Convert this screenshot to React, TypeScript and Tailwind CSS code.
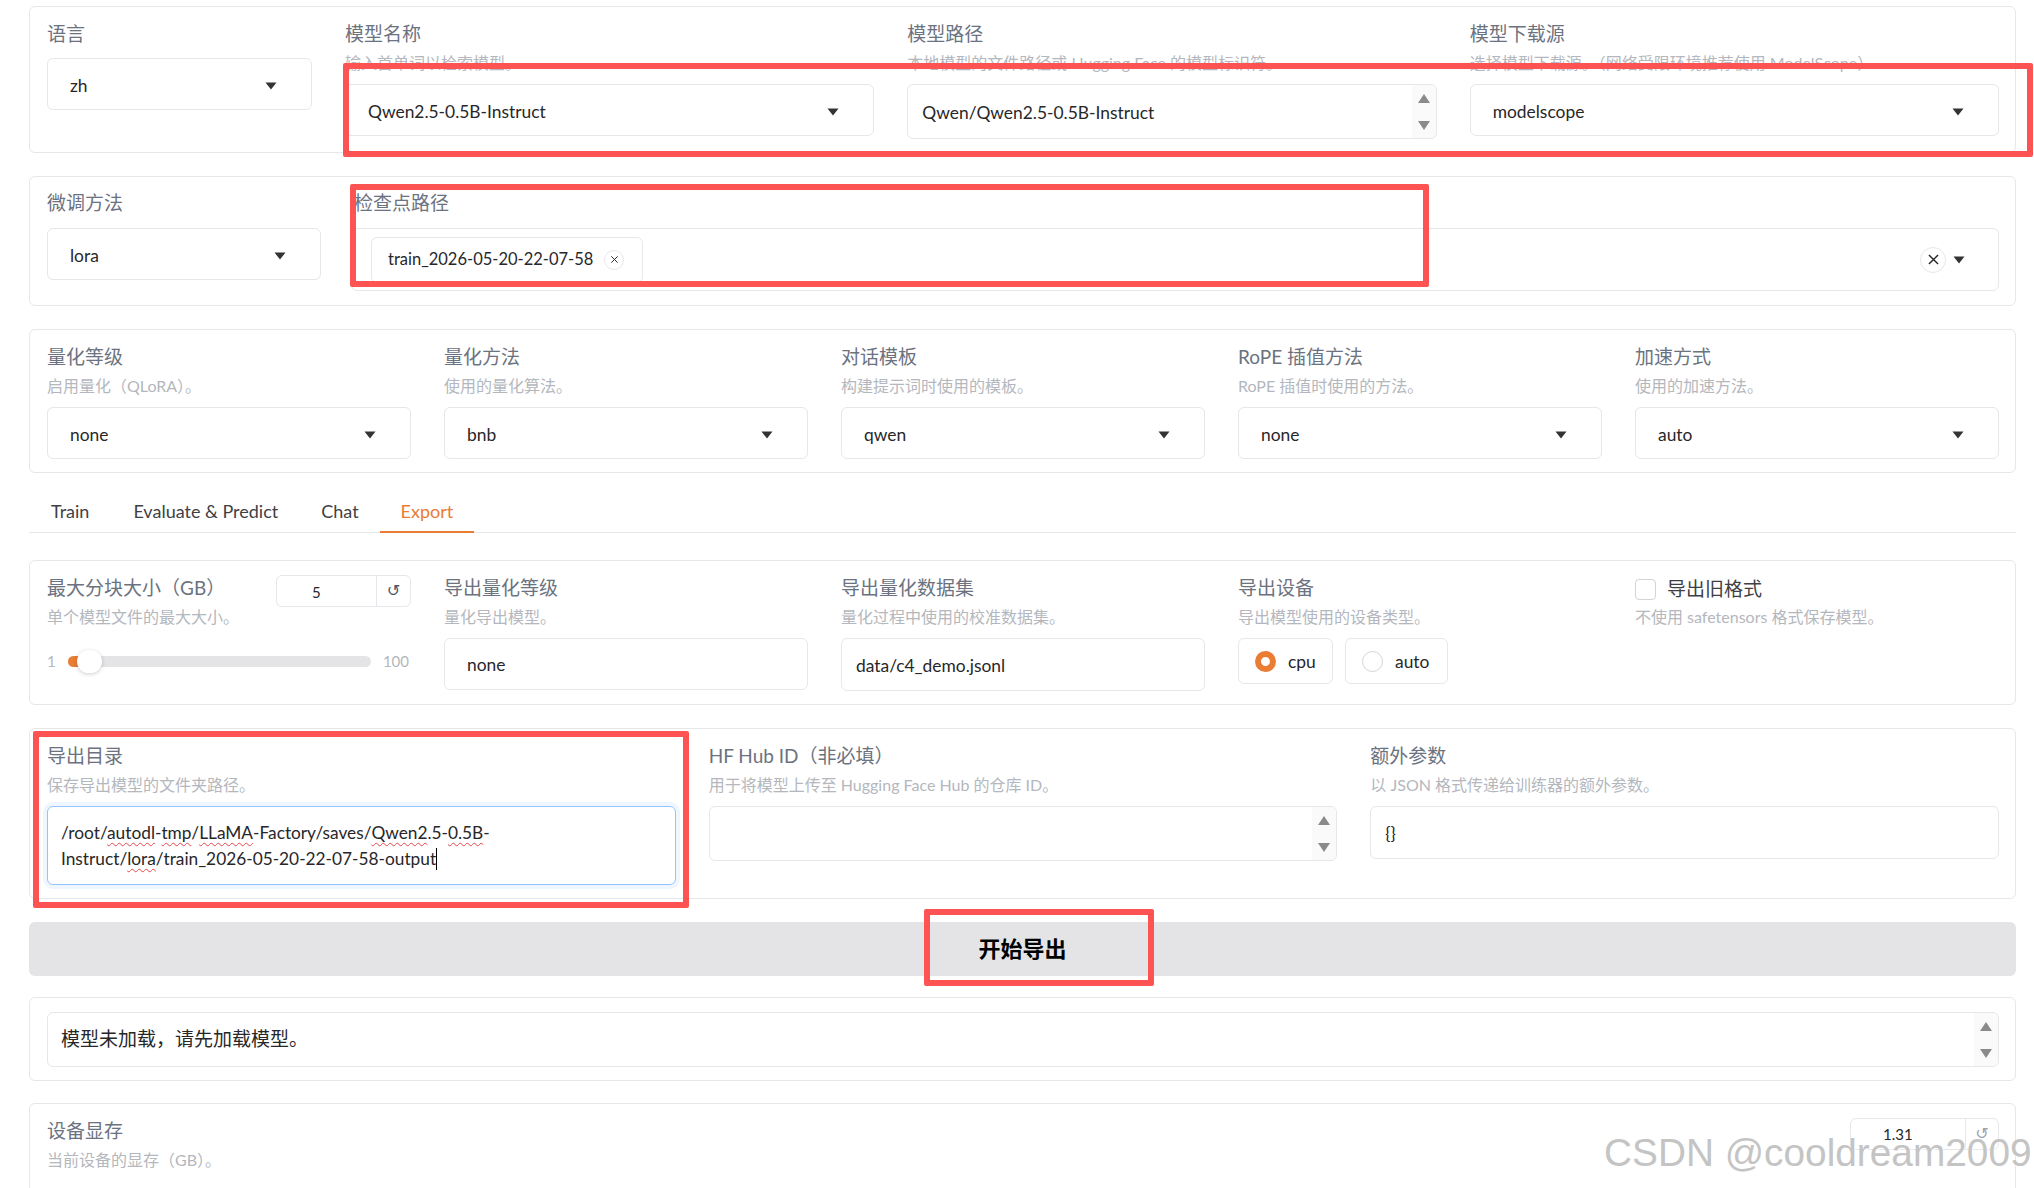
import React from "react";

const Card = ({ className = "", children }: { className?: string; children: React.ReactNode }) => (
  <div className={`box-border rounded-md border border-[#e5e7eb] bg-white pl-[17px] pr-[16px] pt-[14px] ${className}`}>{children}</div>
);

const Label = ({ children, className = "" }: { children: React.ReactNode; className?: string }) => (
  <div className={`h-[25px] whitespace-nowrap text-[19px] leading-[25px] text-[#6b7280] ${className}`}>{children}</div>
);

const Info = ({ children }: { children: React.ReactNode }) => (
  <div className="mt-[5px] h-[24px] whitespace-nowrap text-[16px] leading-[24px] text-[#b4b7bd]">{children}</div>
);

const Arrow = ({ className = "" }: { className?: string }) => (
  <svg width="12" height="8" viewBox="0 0 12 8" className={className}>
    <path d="M0.5 0.5h11L6 7.5z" fill="#333" />
  </svg>
);

const Cross = ({ size }: { size: number }) => (
  <svg width={size} height={size} viewBox="0 0 10 10">
    <path d="M1.5 1.5l7 7M8.5 1.5l-7 7" stroke="#27272a" strokeWidth="1.1" fill="none" />
  </svg>
);

const Select = ({ value, className = "mt-[9px]" }: { value: string; className?: string }) => (
  <div className={`box-border flex h-[52px] items-center justify-between rounded-md border border-[#e5e7eb] bg-white pl-[22px] pr-[34px] text-[17.4px] text-[#27272a] ${className}`}>
    <span className="pt-[5px]">{value}</span>
    <Arrow className="mt-[3px]" />
  </div>
);

const Spin = () => (
  <div className="flex w-[24px] flex-col items-center justify-center gap-[18px] rounded-r-md bg-[#fafafa]">
    <svg width="12" height="9" viewBox="0 0 12 9"><path d="M6 0l6 9H0z" fill="#8a8a8a" /></svg>
    <svg width="12" height="9" viewBox="0 0 12 9"><path d="M6 9l6-9H0z" fill="#8a8a8a" /></svg>
  </div>
);

const Col = ({ children }: { children: React.ReactNode }) => <div className="min-w-0 flex-1 basis-0">{children}</div>;

const Squiggle = ({ children }: { children: React.ReactNode }) => (
  <span className="underline decoration-[#e5484d] decoration-wavy decoration-1 underline-offset-[3px]">{children}</span>
);

const RedBox = ({ className }: { className: string }) => (
  <div className={`pointer-events-none absolute box-border rounded-[2px] border-[6px] border-[#fd5353] ${className}`} />
);

export default function App() {
  return (
    <div className="relative h-[1188px] w-[2034px] overflow-hidden bg-white pl-[29px] pr-[18px] pt-[6px] [font-family:Lato,'Noto_Sans_CJK_SC',sans-serif]">
      {/* model row */}
      <Card className="flex gap-[33px] pb-[13px]">
        <div className="w-[265px] shrink-0">
          <Label>语言</Label>
          <Select value="zh" className="mt-[12px]" />
        </div>
        <Col>
          <Label>模型名称</Label>
          <Info>输入首单词以检索模型。</Info>
          <Select value="Qwen2.5-0.5B-Instruct" />
        </Col>
        <Col>
          <Label>模型路径</Label>
          <Info>本地模型的文件路径或 Hugging Face 的模型标识符。</Info>
          <div className="mt-[9px] flex h-[55px] rounded-md border border-[#e5e7eb] bg-white">
            <div className="flex flex-1 items-center pl-[14px] pt-[3px] text-[17.4px] text-[#27272a]">Qwen/Qwen2.5-0.5B-Instruct</div>
            <Spin />
          </div>
        </Col>
        <Col>
          <Label>模型下载源</Label>
          <Info>选择模型下载源。（网络受限环境推荐使用 ModelScope）</Info>
          <Select value="modelscope" />
        </Col>
      </Card>

      {/* finetune row */}
      <Card className="mt-[23px] flex gap-[30px] pb-[14px]">
        <div className="w-[274px] shrink-0">
          <Label className="-mt-px">微调方法</Label>
          <Select value="lora" className="mt-[13px]" />
        </div>
        <div className="min-w-0 flex-1">
          <Label className="-mt-px pl-[3px]">检查点路径</Label>
          <div className="mt-[13px] flex h-[63px] items-center justify-between rounded-md border border-[#e5e7eb] bg-white pl-[19px] pr-[33px]">
            <div className="flex h-[46px] w-[272px] items-center rounded-md border border-[#e5e7eb] pl-[16px] text-[16.5px] text-[#27272a]">
              <span>train_2026-05-20-22-07-58</span>
              <span className="ml-[11px] flex h-[20px] w-[20px] items-center justify-center rounded-full border border-[#e5e7eb]"><Cross size={9} /></span>
            </div>
            <div className="flex items-center gap-[7px]">
              <span className="flex h-[26px] w-[26px] items-center justify-center rounded-full border border-[#e5e7eb]"><Cross size={13} /></span>
              <Arrow />
            </div>
          </div>
        </div>
      </Card>

      {/* quant row */}
      <Card className="mt-[23px] flex gap-[33px] pb-[13px]">
        {[
          ["量化等级", "启用量化（QLoRA）。", "none"],
          ["量化方法", "使用的量化算法。", "bnb"],
          ["对话模板", "构建提示词时使用的模板。", "qwen"],
          ["RoPE 插值方法", "RoPE 插值时使用的方法。", "none"],
          ["加速方式", "使用的加速方法。", "auto"],
        ].map(([l, i, v]) => (
          <Col key={l}>
            <Label>{l}</Label>
            <Info>{i}</Info>
            <Select value={v} />
          </Col>
        ))}
      </Card>

      {/* tabs */}
      <div className="mt-[18px] flex h-[42px] border-b border-[#e5e7eb] text-[18px] text-[#3f3f46]">
        <div className="flex items-center px-[22px]">Train</div>
        <div className="flex items-center px-[22px]">Evaluate &amp; Predict</div>
        <div className="flex items-center px-[21px]">Chat</div>
        <div className="-mb-px flex items-center border-b-2 border-[#ea7c34] px-[21px] text-[#ea7c34]">Export</div>
      </div>

      {/* export row */}
      <Card className="mt-[27px] flex gap-[33px] pb-[13px]">
        <Col>
          <div className="flex items-start justify-between">
            <Label>最大分块大小（GB）</Label>
            <div className="flex h-[32px] w-[135px] items-center rounded-md border border-[#e5e7eb] text-[15px] text-[#27272a]">
              <span className="w-[99px] pl-[35px] pt-[2px]">5</span>
              <span className="flex h-full flex-1 items-center justify-center border-l border-[#e5e7eb] text-[16px] text-[#4b5563] [font-family:'DejaVu_Sans',sans-serif]">↺</span>
            </div>
          </div>
          <div className="-mt-[2px] h-[24px] whitespace-nowrap text-[16px] leading-[24px] text-[#b4b7bd]">单个模型文件的最大大小。</div>
          <div className="mt-[19px] flex h-[26px] items-center text-[15px] text-[#b4b7bd]">
            <span className="w-[21px]">1</span>
            <div className="relative h-[11px] w-[303px] rounded-full bg-[#e4e4e7]">
              <div className="h-full w-[14px] rounded-l-full bg-[#ea7c34]" />
              <div className="absolute left-[9px] top-[-6px] h-[23px] w-[25px] rounded-full bg-white shadow-[0_1px_4px_rgba(0,0,0,0.2)]" />
            </div>
            <span className="ml-auto mr-[2px]">100</span>
          </div>
        </Col>
        <Col>
          <Label>导出量化等级</Label>
          <Info>量化导出模型。</Info>
          <div className="mt-[9px] flex h-[52px] items-center rounded-md border border-[#e5e7eb] pl-[22px] pt-[3px] text-[17.4px] text-[#27272a]">none</div>
        </Col>
        <Col>
          <Label>导出量化数据集</Label>
          <Info>量化过程中使用的校准数据集。</Info>
          <div className="mt-[9px] flex h-[53px] items-center rounded-md border border-[#e5e7eb] pl-[14px] pt-[3px] text-[17.4px] text-[#27272a]">data/c4_demo.jsonl</div>
        </Col>
        <Col>
          <Label>导出设备</Label>
          <Info>导出模型使用的设备类型。</Info>
          <div className="mt-[9px] flex gap-[12px] text-[17.4px] text-[#27272a]">
            <div className="flex h-[46px] w-[95px] items-center gap-[12px] rounded-md border border-[#e5e7eb] pl-[16px]">
              <span className="box-border h-[21px] w-[21px] rounded-full border-[6px] border-[#ea7c34] bg-white" />
              <span className="pt-[3px]">cpu</span>
            </div>
            <div className="flex h-[46px] w-[103px] items-center gap-[12px] rounded-md border border-[#e5e7eb] pl-[16px]">
              <span className="box-border h-[21px] w-[21px] rounded-full border border-[#d4d4d8] bg-white" />
              <span className="pt-[3px]">auto</span>
            </div>
          </div>
        </Col>
        <Col>
          <div className="flex h-[25px] items-center gap-[11px] pt-[3px]">
            <span className="box-border h-[21px] w-[21px] rounded-[4px] border border-[#d4d4d8] bg-white" />
            <span className="text-[19px] text-[#3f3f46]">导出旧格式</span>
          </div>
          <Info>不使用 safetensors 格式保存模型。</Info>
        </Col>
      </Card>

      {/* output row */}
      <Card className="mt-[23px] flex gap-[33px] pb-[13px]">
        <Col>
          <Label>导出目录</Label>
          <Info>保存导出模型的文件夹路径。</Info>
          <div className="mt-[9px] box-border h-[79px] rounded-md border border-[#93c5fd] bg-white py-[13px] pl-[13px] text-[17.3px] leading-[26px] text-[#27272a] shadow-[0_0_0_4px_#eff6ff]">
            <div className="whitespace-nowrap">/root/<Squiggle>autodl</Squiggle>-<Squiggle>tmp</Squiggle>/<Squiggle>LLaMA</Squiggle>-Factory/saves/<Squiggle>Qwen2</Squiggle>.5-<Squiggle>0.5B</Squiggle>-</div>
            <div className="flex items-center whitespace-nowrap">
              <span>Instruct/<Squiggle>lora</Squiggle>/train_2026-05-20-22-07-58-output</span>
              <span className="h-[22px] w-px bg-black" />
            </div>
          </div>
        </Col>
        <Col>
          <Label>HF Hub ID（非必填）</Label>
          <Info>用于将模型上传至 Hugging Face Hub 的仓库 ID。</Info>
          <div className="mt-[9px] flex h-[55px] justify-end rounded-md border border-[#e5e7eb]">
            <Spin />
          </div>
        </Col>
        <Col>
          <Label>额外参数</Label>
          <Info>以 JSON 格式传递给训练器的额外参数。</Info>
          <div className="mt-[9px] flex h-[53px] items-center rounded-md border border-[#e5e7eb] pl-[14px] pt-[3px] text-[17.4px] text-[#27272a]">{"{}"}</div>
        </Col>
      </Card>

      {/* action */}
      <div className="mt-[23px] flex h-[54px] items-center justify-center rounded-md bg-[#e4e4e7] pb-[2px] text-[22px] font-bold text-black">开始导出</div>

      {/* status */}
      <Card className="mt-[21px] pb-[13px]">
        <div className="flex h-[55px] rounded-md border border-[#e5e7eb]">
          <div className="flex flex-1 items-center pl-[13px] text-[19px] text-[#27272a]">模型未加载，请先加载模型。</div>
          <Spin />
        </div>
      </Card>

      {/* memory */}
      <Card className="mt-[22px] flex h-[120px] items-start justify-between">
        <div>
          <Label>设备显存</Label>
          <Info>当前设备的显存（GB）。</Info>
        </div>
        <div className="flex h-[32px] w-[149px] items-center rounded-md border border-[#e5e7eb] text-[15px] text-[#27272a]">
          <span className="w-[114px] pl-[32px]">1.31</span>
          <span className="flex h-full flex-1 items-center justify-center border-l border-[#e5e7eb] text-[16px] text-[#9ca3af] [font-family:'DejaVu_Sans',sans-serif]">↺</span>
        </div>
      </Card>

      {/* annotations */}
      <RedBox className="left-[343px] top-[63px] h-[94px] w-[1690px]" />
      <RedBox className="left-[350px] top-[184px] h-[103px] w-[1079px]" />
      <RedBox className="left-[33px] top-[731px] h-[177px] w-[656px]" />
      <RedBox className="left-[924px] top-[909px] h-[77px] w-[230px]" />

      {/* watermark */}
      <div className="absolute left-[1604px] top-[1131px] whitespace-nowrap text-[38.8px] leading-[44px] text-[#c4c4c4] [font-family:'Liberation_Sans',sans-serif] [text-shadow:1px_1px_1px_#ffffff]">CSDN @cooldream2009</div>
    </div>
  );
}
